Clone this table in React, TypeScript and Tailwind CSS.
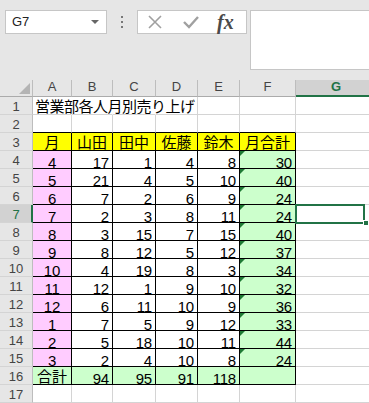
import React from "react";

const COLS = [
  { key: "A", w: 39 },
  { key: "B", w: 41 },
  { key: "C", w: 43 },
  { key: "D", w: 42 },
  { key: "E", w: 42 },
  { key: "F", w: 56 },
  { key: "G", w: 80 },
];

type Val = string | number;

const DATA: Record<number, Val[]> = {
  1: ["営業部各人月別売り上げ"],
  3: ["月", "山田", "田中", "佐藤", "鈴木", "月合計"],
  4: [4, 17, 1, 4, 8, 30],
  5: [5, 21, 4, 5, 10, 40],
  6: [6, 7, 2, 6, 9, 24],
  7: [7, 2, 3, 8, 11, 24],
  8: [8, 3, 15, 7, 15, 40],
  9: [9, 8, 12, 5, 12, 37],
  10: [10, 4, 19, 8, 3, 34],
  11: [11, 12, 1, 9, 10, 32],
  12: [12, 6, 11, 10, 9, 36],
  13: [1, 7, 5, 9, 12, 33],
  14: [2, 5, 18, 10, 11, 44],
  15: [3, 2, 4, 10, 8, 24],
  16: ["合計", 94, 95, 91, 118, ""],
};

const ROWS = Array.from({ length: 17 }, (_, i) => i + 1);

const UI_FONT = '"Liberation Sans", Arial, sans-serif';
const JP_FONT = '"Noto Sans CJK JP", "Liberation Sans", sans-serif';

function Cell({ r, c, w }: { r: number; c: number; w: number }) {
  const v = DATA[r]?.[c] ?? "";
  const inTable = r >= 3 && r <= 16 && c <= 5;
  const isText = typeof v === "string";

  let bg = "";
  if (r === 3 && inTable) bg = "bg-[#ffff00]";
  else if (r >= 4 && r <= 15 && c === 0) bg = "bg-[#ffccff]";
  else if ((r >= 4 && r <= 15 && c === 5) || (r === 16 && inTable)) bg = "bg-[#ccffcc]";

  let right = inTable ? "border-r-black" : "border-r-[#d4d4d4]";
  if (r === 1 && c <= 2) right = "border-r-transparent";
  const bottom = inTable || (r === 2 && c <= 5) ? "border-b-black" : "border-b-[#d4d4d4]";

  const centered = r === 3 || (c === 0 && r >= 4);
  const align =
    r === 1 ? "justify-start pl-[2px]" : centered ? "justify-center" : "justify-end pr-[3px]";

  return (
    <div
      className={`relative flex h-[18px] shrink-0 border-r border-b ${isText ? "items-end" : "items-start pt-[4px]"} ${right} ${bottom} ${bg} ${align}`}
      style={{ width: w }}
    >
      {r >= 4 && r <= 15 && c === 5 ? (
        <span className="absolute left-0 top-0 h-0 w-0 border-t-[5px] border-r-[5px] border-t-[#1e7b34] border-r-transparent" />
      ) : null}
      {v === "" ? null : isText ? (
        <span
          className={`block h-[17px] whitespace-nowrap text-[15px] leading-[17px] text-black ${r === 1 ? "tracking-[-0.5px]" : ""}`}
          style={{ fontFamily: JP_FONT }}
        >
          {v}
        </span>
      ) : (
        <span
          className="block h-[15px] whitespace-nowrap text-[15px] leading-[15px] tracking-[-0.2px] text-black"
          style={{ fontFamily: UI_FONT }}
        >
          {v}
        </span>
      )}
    </div>
  );
}

export default function App() {
  return (
    <div className="relative h-[403px] w-[369px] overflow-hidden bg-[#e6e6e6]" style={{ fontFamily: UI_FONT }}>
      {/* formula bar */}
      <div className="relative h-[80px]">
        <div className="absolute left-[5px] top-[10px] flex h-[24px] w-[102px] items-center border border-[#c6c6c6] bg-white pl-[6px] text-[13px] text-[#222]">
          G7
          <span className="absolute right-[7px] top-[9px] h-0 w-0 border-x-[4px] border-t-[4px] border-x-transparent border-t-[#666]" />
        </div>
        <div className="absolute left-[121px] top-[16px] flex flex-col gap-[3px]">
          <span className="h-[2px] w-[2px] bg-[#777]" />
          <span className="h-[2px] w-[2px] bg-[#777]" />
          <span className="h-[2px] w-[2px] bg-[#777]" />
        </div>
        <div className="absolute left-[137px] top-[10px] flex h-[24px] w-[110px] items-center border border-[#c6c6c6] bg-white">
          <svg width="16" height="14" viewBox="0 0 16 14" className="ml-[9px]">
            <path d="M2 1 L14 13 M14 1 L2 13" stroke="#a0a0a0" strokeWidth="1.6" fill="none" />
          </svg>
          <svg width="18" height="14" viewBox="0 0 18 14" className="ml-[19px]">
            <path d="M2 7 L7 12 L16 2" stroke="#a0a0a0" strokeWidth="2.4" fill="none" />
          </svg>
          <span
            className="ml-[17px] text-[20px] font-bold italic leading-none text-[#4a4a4a]"
            style={{ fontFamily: '"Liberation Serif", "Times New Roman", serif' }}
          >
            fx
          </span>
        </div>
        <div className="absolute left-[250px] top-[10px] h-[60px] w-[130px] border border-[#c6c6c6] bg-white" />
      </div>

      {/* grid */}
      <div className="relative bg-white">
        <div className="flex h-[17px] bg-[#e6e6e6]">
          <div className="relative h-[17px] w-[33px] shrink-0 border-r border-b border-r-[#bdbdbd] border-b-[#ababab]">
            <svg width="11" height="11" viewBox="0 0 11 11" className="absolute bottom-[2px] right-[2px]">
              <path d="M11 0 L11 11 L0 11 Z" fill="#b4b4b4" />
            </svg>
          </div>
          {COLS.map((col) =>
            col.key === "G" ? (
              <div
                key={col.key}
                className="flex h-[17px] shrink-0 items-start justify-center border-b-2 border-b-[#217346] bg-[#d2d2d2] text-[13px] leading-[14px] font-bold text-[#217346]"
                style={{ width: col.w }}
              >
                {col.key}
              </div>
            ) : (
              <div
                key={col.key}
                className="flex h-[17px] shrink-0 items-start justify-center border-r border-b border-r-[#bdbdbd] border-b-[#ababab] text-[13px] leading-[14px] text-[#444]"
                style={{ width: col.w }}
              >
                {col.key}
              </div>
            ),
          )}
        </div>

        {ROWS.map((r) => (
          <div key={r} className="flex h-[18px]">
            <div
              className={`flex h-[18px] w-[33px] shrink-0 items-start justify-center border-b border-b-[#d4d4d4] pt-[3px] text-[13px] leading-[14px] ${
                r === 7
                  ? "border-r-2 border-r-[#217346] bg-[#d2d2d2] pl-[1px] text-[#217346]"
                  : "border-r border-r-[#bdbdbd] bg-[#e6e6e6] text-[#444]"
              }`}
            >
              {r}
            </div>
            {COLS.map((col, c) => (
              <Cell key={col.key} r={r} c={c} w={col.w} />
            ))}
          </div>
        ))}

        {/* active cell G7 */}
        <div className="absolute left-[295px] top-[124px] h-[20px] w-[70px] border-2 border-[#217346]" />
        <div className="absolute left-[363px] top-[140px] h-[6px] w-[6px] border border-white bg-[#217346]" />
      </div>
    </div>
  );
}
